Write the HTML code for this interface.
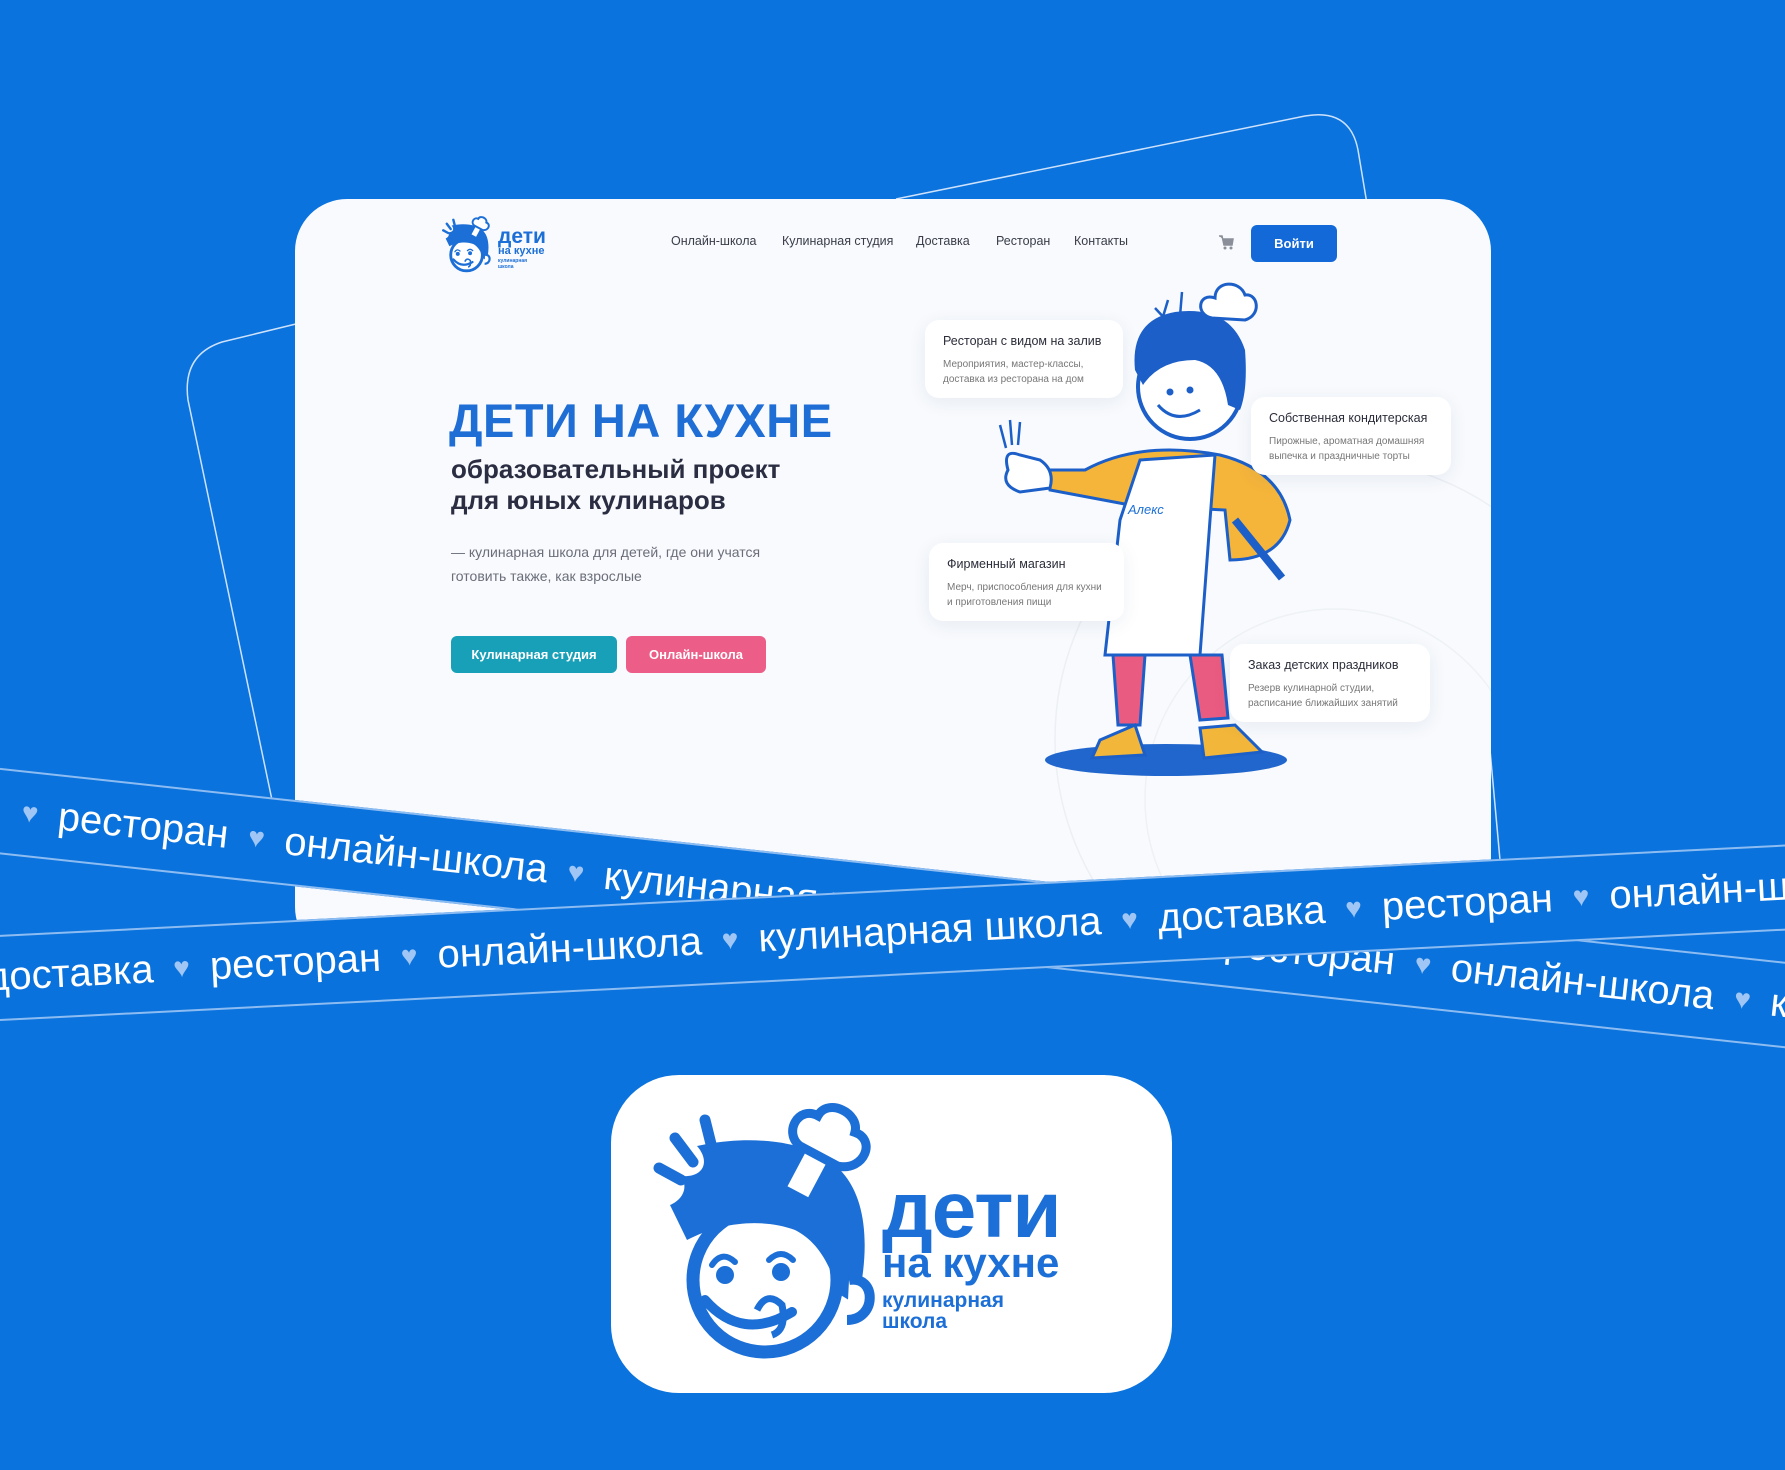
<!DOCTYPE html>
<html><head><meta charset="utf-8">
<style>
*{margin:0;padding:0;box-sizing:border-box}
body{width:1785px;height:1470px;background:#0a73dd;position:relative;overflow:hidden;font-family:"Liberation Sans","Noto Sans CJK SC",sans-serif}
.abs{position:absolute}
.card{left:295px;top:199px;width:1196px;height:760px;background:#f8fafd;border-radius:52px;overflow:hidden}
.nav{top:234px;font-size:12.5px;color:#3a3d4a}
.btn{border-radius:6px;color:#fff;font-size:13px;font-weight:bold;text-align:center}
.info{background:#fff;border-radius:14px;box-shadow:0 4px 18px rgba(30,60,120,.08);padding:14px 18px;width:198px;height:78px}
.info b{display:block;font-size:12.5px;color:#2b2d3a;font-weight:normal;margin-bottom:9px}
.info p{font-size:10px;color:#777;line-height:15px}
.rib{left:-100px;width:2200px;height:86px;border-top:2px solid #8cbcf2;border-bottom:2px solid #8cbcf2;background:#0a72dc;transform-origin:0 0;white-space:nowrap;color:#fff;font-size:40px;line-height:80px}
.rib i{font-style:normal;color:#9fc6f4;font-size:28px;margin:0 20px;position:relative;top:-4px}
</style></head><body>

<svg class="abs" style="left:0;top:0" width="1785" height="1470">
<path d="M896 199 L1305 116 Q1350 108 1358 150 L1368 210" fill="none" stroke="#cfe2fb" stroke-width="1.5"/>
<path d="M300 323 L222 342 Q182 355 188 400 L272 800" fill="none" stroke="#cfe2fb" stroke-width="1.5"/>
<path d="M1480 640 L1500 860" fill="none" stroke="#cfe2fb" stroke-width="1.5"/>
</svg>

<div class="abs card">
<svg class="abs" style="left:0;top:0" width="1196" height="760">
<circle cx="1040" cy="540" r="280" fill="none" stroke="#eceff4" stroke-width="1.5"/>
<circle cx="1040" cy="600" r="190" fill="none" stroke="#eef1f5" stroke-width="1.5"/>
</svg>
</div>

<svg width="0" height="0" style="position:absolute">
<defs>
<g id="face">
<path d="M-62 -160 L-54 -128 M-92 -142 L-74 -118 M-108 -112 L-86 -100" stroke="#1c6fd6" stroke-width="11" stroke-linecap="round"/>
<circle cx="-2" cy="0" r="72" fill="#fff" stroke="#1c6fd6" stroke-width="13"/>
<path d="M-97 -75 C-85 -80 -78 -92 -86 -104 C-64 -102 -56 -118 -70 -134 C-20 -145 45 -142 75 -108 C102 -78 102 -25 90 25 L72 14 C62 -20 48 -40 28 -50 C-5 -62 -45 -58 -80 -40 Z" fill="#1c6fd6"/>
<path d="M82 0 C110 -5 110 40 80 40" fill="#fff" stroke="#1c6fd6" stroke-width="10"/>
<circle cx="-42" cy="-5" r="9" fill="#1c6fd6"/><circle cx="14" cy="-8" r="9" fill="#1c6fd6"/>
<path d="M-55 -15 Q-45 -30 -32 -18 M2 -20 Q14 -32 26 -20" fill="none" stroke="#1c6fd6" stroke-width="6" stroke-linecap="round"/>
<path d="M-62 20 Q-25 62 25 32" fill="none" stroke="#1c6fd6" stroke-width="10" stroke-linecap="round"/>
<path d="M-10 30 Q0 10 15 25 Q20 50 5 55" fill="none" stroke="#1c6fd6" stroke-width="7"/>
<g transform="translate(52,-128) rotate(28) scale(0.9)">
<rect x="-18" y="0" width="36" height="55" fill="#fff" stroke="#1c6fd6" stroke-width="10" rx="4"/>
<path d="M-22 4 C-45 0 -45 -35 -20 -35 C-20 -58 20 -60 25 -38 C50 -42 55 -5 26 4 Z" fill="#fff" stroke="#1c6fd6" stroke-width="10"/>
</g>
</g>
</defs></svg>

<svg class="abs" style="left:440px;top:210px" width="60" height="66"><use href="#face" transform="translate(27,45) scale(0.22)"/></svg>
<div class="abs" style="left:498px;top:226px;color:#1c6fd6;font-weight:bold;line-height:1">
<div style="font-size:21px">дети</div><div style="font-size:11px;margin-top:-1px">на кухне</div>
<div style="font-size:5px;margin-top:1px;line-height:6px">кулинарная<br>школа</div></div>

<div class="abs nav" style="left:671px">Онлайн-школа</div>
<div class="abs nav" style="left:782px">Кулинарная студия</div>
<div class="abs nav" style="left:916px">Доставка</div>
<div class="abs nav" style="left:996px">Ресторан</div>
<div class="abs nav" style="left:1074px">Контакты</div>
<svg class="abs" style="left:1218px;top:234px" width="16" height="16"><path d="M1 2 H4 L6 11 H14 L15 5 H5" fill="#8b8f9a" stroke="#8b8f9a" stroke-width="1.5"/><circle cx="7" cy="14" r="1.5" fill="#8b8f9a"/><circle cx="13" cy="14" r="1.5" fill="#8b8f9a"/></svg>
<div class="abs btn" style="left:1251px;top:225px;width:86px;height:37px;line-height:37px;background:#1469d8">Войти</div>

<div class="abs" style="left:449px;top:393px;font-size:47px;font-weight:bold;color:#1f6ed6;letter-spacing:0.5px">ДЕТИ НА КУХНЕ</div>
<div class="abs" style="left:451px;top:454px;font-size:26px;font-weight:bold;color:#2b2d42;line-height:31px">образовательный проект<br>для юных кулинаров</div>
<div class="abs" style="left:451px;top:540px;font-size:14px;color:#6b6e7a;line-height:24px">— кулинарная школа для детей, где они учатся<br>готовить также, как взрослые</div>
<div class="abs btn" style="left:451px;top:636px;width:166px;height:37px;line-height:37px;background:#17a0b8">Кулинарная студия</div>
<div class="abs btn" style="left:626px;top:636px;width:140px;height:37px;line-height:37px;background:#ec5d88">Онлайн-школа</div>

<svg class="abs" style="left:0;top:0" width="1785" height="1470">
<ellipse cx="1166" cy="760" rx="121" ry="16" fill="#2166cc"/>
<path d="M1113 655 L1145 655 L1140 725 L1118 725 Z" fill="#e95b80" stroke="#1c5fc8" stroke-width="3"/>
<path d="M1190 655 L1222 655 L1228 718 L1200 720 Z" fill="#e95b80" stroke="#1c5fc8" stroke-width="3"/>
<path d="M1100 740 L1135 725 L1145 755 L1092 758 Z" fill="#f1b63a" stroke="#1c5fc8" stroke-width="3"/>
<path d="M1200 728 L1235 725 L1262 752 L1204 758 Z" fill="#f1b63a" stroke="#1c5fc8" stroke-width="3"/>
<path d="M1085 470 Q1140 440 1220 455 Q1280 470 1290 520 Q1280 560 1230 560 L1225 510 L1130 505 L1050 490 L1048 470 Z" fill="#f5b53b" stroke="#1c5fc8" stroke-width="3"/>
<path d="M1140 460 L1215 455 L1210 520 L1200 655 L1105 655 L1120 520 Z" fill="#fff" stroke="#1c5fc8" stroke-width="3"/>
<text x="1128" y="514" font-size="13" fill="#1c6fd6" font-style="italic" font-family="Liberation Sans">Алекс</text>
<path d="M1008 470 Q1002 448 1020 455 L1040 460 Q1055 470 1050 488 L1020 492 Q1000 485 1008 470 Z" fill="#fff" stroke="#1c5fc8" stroke-width="3"/>
<path d="M1000 425 L1006 448 M1010 420 L1012 445 M1020 422 L1018 445" stroke="#1c5fc8" stroke-width="2.5"/>
<path d="M1235 520 L1282 578" stroke="#1c5fc8" stroke-width="8"/>
<circle cx="1190" cy="387" r="52" fill="#fff" stroke="#1c5fc8" stroke-width="4"/>
<path d="M1135 370 Q1130 320 1175 312 Q1230 305 1245 350 Q1248 390 1240 410 L1228 405 Q1222 365 1195 360 Q1160 360 1143 385 Z" fill="#1c5fc8"/>
<path d="M1168 300 L1162 320 M1182 292 L1180 316 M1155 308 L1168 322" stroke="#1c5fc8" stroke-width="2.5"/>
<path d="M1212 318 C1195 315 1198 292 1215 298 C1215 280 1240 280 1245 295 C1258 293 1262 315 1245 320 Z" fill="#fff" stroke="#1c5fc8" stroke-width="3"/>
<circle cx="1170" cy="392" r="3.5" fill="#1c5fc8"/><circle cx="1190" cy="390" r="3.5" fill="#1c5fc8"/>
<path d="M1158 405 Q1175 425 1200 410" fill="none" stroke="#1c5fc8" stroke-width="3"/>
</svg>

<div class="abs info" style="left:925px;top:320px"><b>Ресторан с видом на залив</b><p>Мероприятия, мастер-классы,<br>доставка из ресторана на дом</p></div>
<div class="abs info" style="left:1251px;top:397px;width:200px"><b>Собственная кондитерская</b><p>Пирожные, ароматная домашняя<br>выпечка и праздничные торты</p></div>
<div class="abs info" style="left:929px;top:543px;width:195px"><b>Фирменный магазин</b><p>Мерч, приспособления для кухни<br>и приготовления пищи</p></div>
<div class="abs info" style="left:1230px;top:644px;width:200px"><b>Заказ детских праздников</b><p>Резерв кулинарной студии,<br>расписание ближайших занятий</p></div>

<div class="abs rib" style="top:757px;transform:rotate(6.2deg);padding-left:107px"><i>♥</i>ресторан<i>♥</i>онлайн-школа<i>♥</i>кулинарная школа<i>♥</i>доставка<i>♥</i>ресторан<i>♥</i>онлайн-школа<i>♥</i>кулинарная школа</div>
<div class="abs rib" style="top:940px;transform:rotate(-2.9deg);padding-left:84px">доставка<i>♥</i>ресторан<i>♥</i>онлайн-школа<i>♥</i>кулинарная школа<i>♥</i>доставка<i>♥</i>ресторан<i>♥</i>онлайн-школа</div>

<div class="abs" style="left:611px;top:1075px;width:561px;height:318px;background:#fff;border-radius:68px"></div>
<svg class="abs" style="left:611px;top:1075px" width="561" height="318"><use href="#face" transform="translate(156,205)"/></svg>
<div class="abs" style="left:882px;top:1170px;color:#1c6fd6;font-weight:bold;line-height:1">
<div style="font-size:80px;letter-spacing:-1px">дети</div>
<div style="font-size:42px;margin-top:-8px">на кухне</div>
<div style="font-size:21px;line-height:21px;margin-top:6px">кулинарная<br>школа</div></div>
</body></html>
